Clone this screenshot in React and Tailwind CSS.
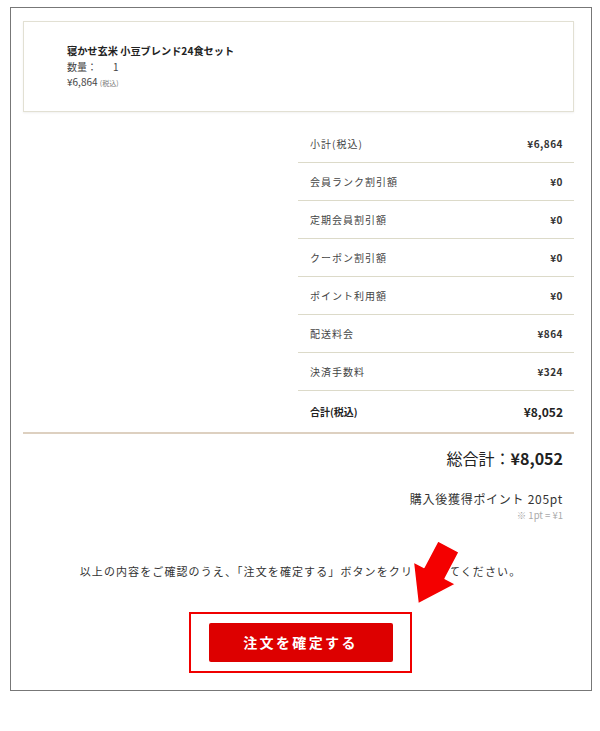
const rows = [
  { label: '小計(税込)', value: '¥6,864' },
  { label: '会員ランク割引額', value: '¥0' },
  { label: '定期会員割引額', value: '¥0' },
  { label: 'クーポン割引額', value: '¥0' },
  { label: 'ポイント利用額', value: '¥0' },
  { label: '配送料会', value: '¥864' },
  { label: '決済手数料', value: '¥324' },
];

function Arrow() {
  return (
    <svg className="absolute left-[405px] top-[535px]" width="60" height="75" viewBox="0 0 60 75">
      <polygon
        points="32.9,5.9 54.1,17.1 40.1,43.6 50.7,49.2 13.1,69 8.3,26.8 18.9,32.4"
        fill="#f40000"
        stroke="#ffffff"
        strokeWidth="1.5"
        strokeLinejoin="round"
      />
    </svg>
  );
}

export default function App() {
  return (
    <div className="relative w-[600px] h-[731px] bg-white pt-[7px] pl-[10px] text-[#333]" style={{ fontFamily: '"Noto Sans CJK JP", "Noto Sans", sans-serif' }}>
      <div className="w-[582px] h-[684px] border border-[#777] pl-[12px] pt-[13px]">
        <div className="w-[551px]">
          {/* product */}
          <div className="h-[91px] border border-[#e2e0d3] shadow-[0_1px_2px_rgba(0,0,0,0.06)] pl-[43px] pt-[21px]">
            <p className="text-[10.2px] font-bold leading-[16px] text-[#222]">寝かせ玄米 小豆ブレンド24食セット</p>
            <p className="text-[10px] leading-[15px] text-[#444] flex">
              <span className="w-[46px]">数量：</span>
              <span>1</span>
            </p>
            <p className="text-[10px] leading-[15px] text-[#444]">
              ¥6,864 <span className="text-[7px] text-[#777]">(税込)</span>
            </p>
          </div>

          {/* summary */}
          <div className="ml-auto w-[276px] mt-[13px]">
            {rows.map(r => (
              <div key={r.label} className="h-[38px] flex items-center justify-between pl-[12px] pr-[11px] border-b border-[#dcdac9]">
                <span className="text-[10px] tracking-[0.1em] text-[#444]">{r.label}</span>
                <span className="text-[10px] font-bold tracking-[0.05em] text-[#333]">{r.value}</span>
              </div>
            ))}
            <div className="h-[41px] flex items-center justify-between pl-[12px] pr-[11px]">
              <span className="text-[10px] font-bold text-[#222]">合計(税込)</span>
              <span className="text-[12px] font-bold text-[#222]">¥8,052</span>
            </div>
          </div>
          <div className="h-[2px] bg-[#ddd0c0]" />

          {/* totals */}
          <div className="pr-[11px] flex flex-col items-end">
            <p className="mt-[12px] text-[16px] leading-[24px] text-[#222]">
              総合計：<span className="font-bold">¥8,052</span>
            </p>
            <p className="mt-[20px] text-[12px] leading-[18px] tracking-[0.06em] text-[#333]">購入後獲得ポイント 205pt</p>
            <p className="mt-[1px] text-[9.5px] leading-[13px] text-[#aaa]">※ 1pt = ¥1</p>
          </div>

          <p className="mt-[41px] text-center text-[11px] leading-[16px] tracking-[0.1em] text-[#333] pl-[4px]">
            以上の内容をご確認のうえ、「注文を確定する」ボタンをクリックしてください。
          </p>

          <div className="mt-[33px] flex justify-center pl-[4px]">
            <div className="w-[223px] h-[61px] border-2 border-[#f00000] flex items-center justify-center">
              <button className="w-[184px] h-[39px] bg-[#dd0000] rounded-[2px] text-white text-[14px] font-bold tracking-[0.17em]">
                注文を確定する
              </button>
            </div>
          </div>
        </div>
      </div>
      <Arrow />
    </div>
  );
}
